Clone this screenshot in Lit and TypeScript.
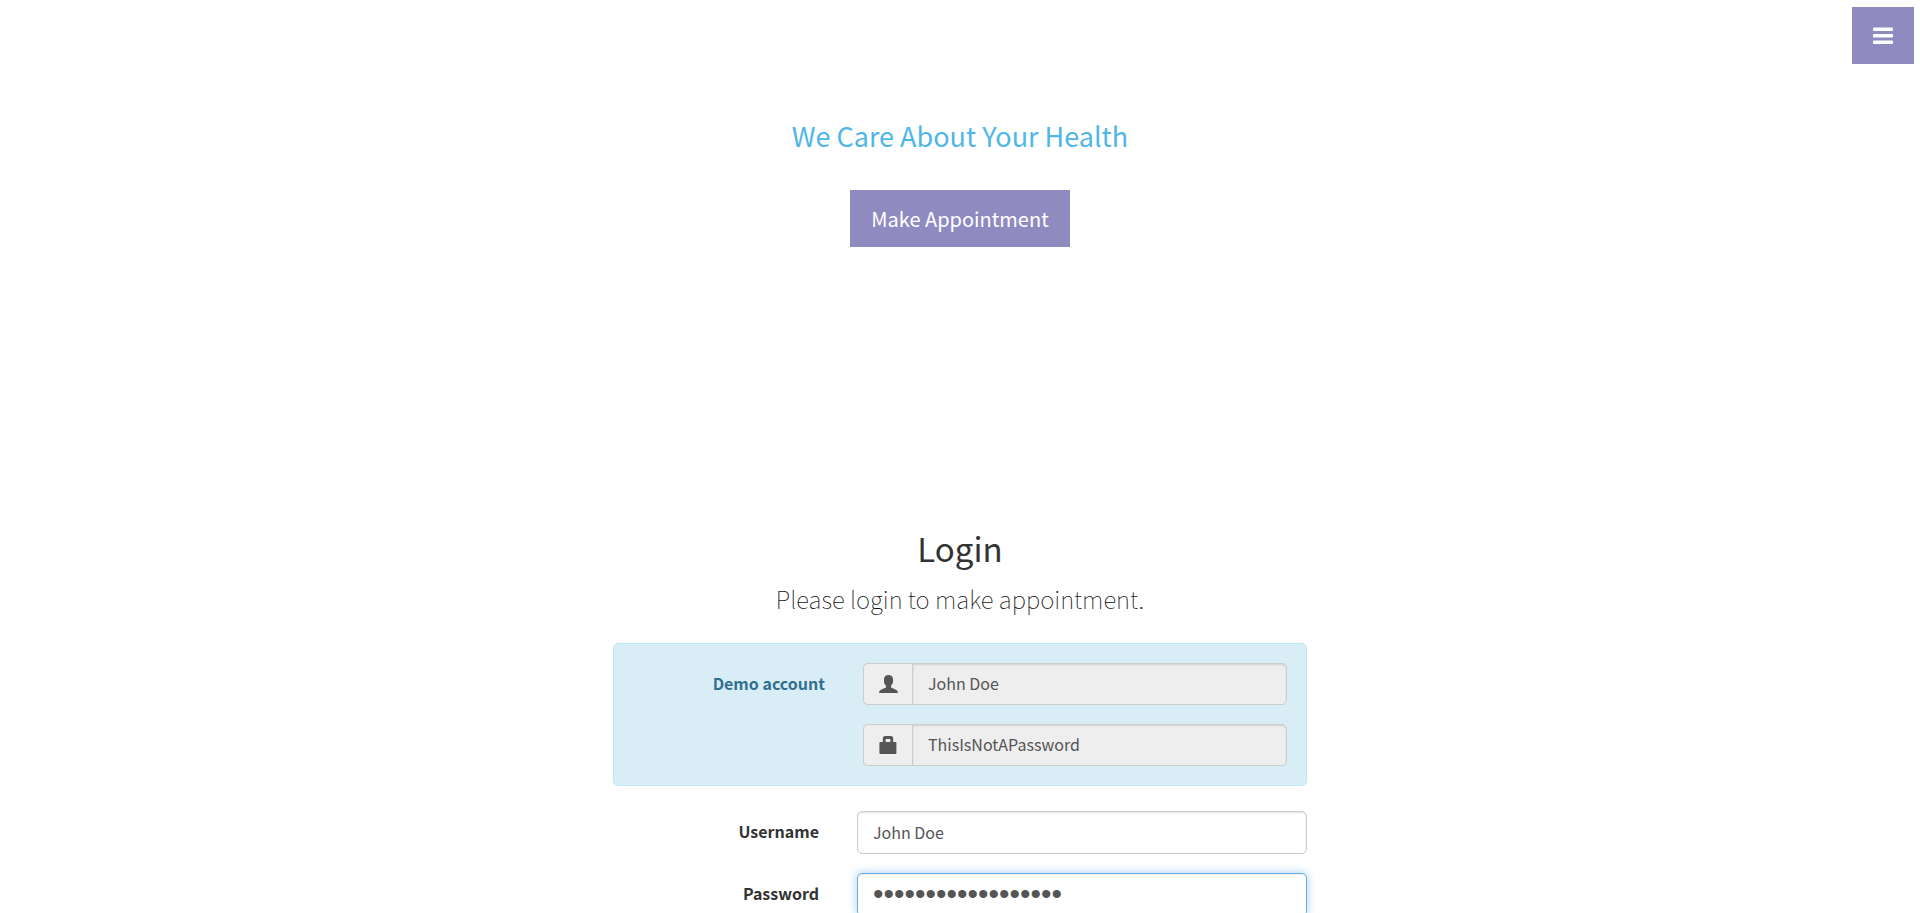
import { LitElement, html, css } from "lit";
import { customElement } from "lit/decorators.js";

@customElement("app-root")
export class AppRoot extends LitElement {
  static styles = css`
    :host {
      display: block;
      height: 100vh;
      overflow: hidden;
      background: #fff;
      color: #333;
      font-family: "Noto Sans CJK JP", "Noto Sans", sans-serif;
      font-size: 16px;
      line-height: 24px;
    }
    *, *::before, *::after { box-sizing: border-box; }
    .menu {
      position: absolute;
      top: 7px;
      right: 6px;
      display: flex;
      align-items: center;
      justify-content: center;
      width: 62px;
      height: 57px;
      background: #8f8bc1;
      color: #fff;
    }
    .hero {
      display: flex;
      flex-direction: column;
      align-items: center;
      height: 496px;
      padding-top: 115px;
      gap: 33px;
    }
    h2, h3, p { margin: 0; text-align: center; }
    h3 { font-size: 27px; line-height: 42px; font-weight: 400; color: #4fb6e7; }
    .cta {
      padding: 14px 21px;
      background: #8f8bc1;
      color: #fff;
      font-size: 20px;
      line-height: 29px;
      text-decoration: none;
    }
    main { width: 694px; max-width: 100%; margin: 0 auto; }
    header { padding-top: 28px; margin-bottom: 26px; }
    h2 { font-size: 33px; line-height: 48px; font-weight: 400; }
    .lead { font-size: 24px; line-height: 36px; font-weight: 100; margin-top: 9px; color: #111; }
    .demo, .row { display: grid; column-gap: 38px; }
    .demo {
      grid-template-columns: 192fr 424fr;
      row-gap: 19px;
      padding: 19px;
      margin-bottom: 25px;
      background: #d9edf7;
      border: 1px solid #bce8f1;
      border-radius: 5px;
      color: #31708f;
    }
    .row { grid-template-columns: 206fr 450fr; margin-bottom: 19px; }
    label { font-weight: 700; text-align: right; padding-top: 8px; }
    .group { display: flex; grid-column: 2; }
    .addon {
      display: flex;
      align-items: center;
      justify-content: center;
      width: 49px;
      flex: none;
      background: #eee;
      border: 1px solid #ccc;
      border-right: 0;
      border-radius: 5px 0 0 5px;
      color: #555;
    }
    input {
      width: 100%;
      min-width: 0;
      height: 43px;
      margin: 0;
      padding: 0 15px 2px;
      border: 1px solid #ccc;
      border-radius: 5px;
      background: #fff;
      color: #555;
      font: inherit;
      outline: none;
      box-shadow: inset 0 1px 2px rgba(0, 0, 0, 0.12);
    }
    input[type="password"] { font-family: "Liberation Sans", Arial, sans-serif; font-size: 30px; }
    .group input { height: 42px; background: #eee; border-radius: 0 5px 5px 0; }
    .active {
      border-color: #66afe9;
      box-shadow: inset 0 1px 1px rgba(0, 0, 0, 0.075), 0 0 10px rgba(102, 175, 233, 0.6);
    }
    svg { display: block; }
  `;

  render() {
    return html`
      <a class="menu" href="#menu" aria-label="Menu">
        <svg width="20" height="18" viewBox="0 0 20 18" fill="currentColor">
          <rect y="0.5" width="20" height="3.6" rx="0.8" />
          <rect y="7" width="20" height="3.6" rx="0.8" />
          <rect y="13.4" width="20" height="3.6" rx="0.8" />
        </svg>
      </a>
      <section class="hero">
        <h3>We Care About Your Health</h3>
        <a class="cta" href="#appointment">Make Appointment</a>
      </section>
      <main>
        <header>
          <h2>Login</h2>
          <p class="lead">Please login to make appointment.</p>
        </header>
        <form>
          <div class="demo">
            <label for="demo-user">Demo account</label>
            <div class="group">
              <span class="addon">
                <svg width="19" height="18" viewBox="0 0 19 18" fill="currentColor">
                  <path d="M9.5 0C12.4 0 14 1.7 14 4.2V6.8C14 8.3 13.1 9.2 12.3 10.4C11.9 11 11.8 11.7 12 12.2C12.6 13.2 18.4 14.2 18.8 16.8V18H0.2V16.8C0.6 14.2 6.4 13.2 7 12.2C7.2 11.7 7.1 11 6.7 10.4C5.9 9.2 5 8.3 5 6.8V4.2C5 1.7 6.6 0 9.5 0Z" />
                </svg>
              </span>
              <input id="demo-user" type="text" value="John Doe" readonly />
            </div>
            <div class="group">
              <span class="addon">
                <svg width="18" height="18" viewBox="0 0 18 18" fill="currentColor">
                  <path fill-rule="evenodd" d="M3.8 6V2.4Q3.8 0 6.2 0H11.8Q14.2 0 14.2 2.4V6H16.4Q17.4 6 17.4 7V17Q17.4 18 16.4 18H1.4Q0.4 18 0.4 17V7Q0.4 6 1.4 6ZM6.6 6H11.4V3.6Q11.4 3 10.8 3H7.2Q6.6 3 6.6 3.6Z" />
                </svg>
              </span>
              <input type="text" aria-label="Demo password" value="ThisIsNotAPassword" readonly />
            </div>
          </div>
          <div class="row">
            <label for="username">Username</label>
            <input id="username" type="text" value="John Doe" />
          </div>
          <div class="row">
            <label for="password">Password</label>
            <input id="password" class="active" type="password" value="ThisIsNotAPassword" />
          </div>
        </form>
      </main>
    `;
  }
}
